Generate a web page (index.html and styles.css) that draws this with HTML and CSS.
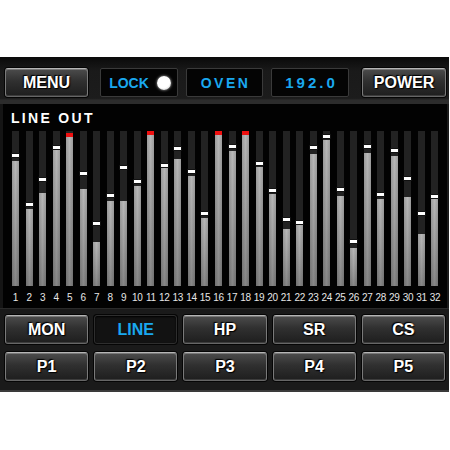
FILE: index.html
```html
<!DOCTYPE html>
<html>
<head>
<meta charset="utf-8">
<link rel="stylesheet" href="styles.css">
</head>
<body>
<div class="screen">
  <div class="topbar">
    <div class="btn menu">MENU</div>
    <div class="disp lock">LOCK <span class="dot"></span></div>
    <div class="disp oven">OVEN</div>
    <div class="disp rate">192.0</div>
    <div class="btn power">POWER</div>
  </div>
  <div class="panel">
    <div class="title">LINE OUT</div>
    <div class="bars">
      <div class="ch"><div class="track"><div class="fill" style="height:125px"></div><div class="mark" style="top:23px"></div></div><div class="num">1</div></div>
      <div class="ch"><div class="track"><div class="fill" style="height:77px"></div><div class="mark" style="top:72px"></div></div><div class="num">2</div></div>
      <div class="ch"><div class="track"><div class="fill" style="height:93px"></div><div class="mark" style="top:47px"></div></div><div class="num">3</div></div>
      <div class="ch"><div class="track"><div class="fill" style="height:137px"></div><div class="mark" style="top:15px"></div></div><div class="num">4</div></div>
      <div class="ch"><div class="track"><div class="fill" style="height:150px"></div><div class="peak" style="top:2px"></div></div><div class="num">5</div></div>
      <div class="ch"><div class="track"><div class="fill" style="height:97px"></div><div class="mark" style="top:41px"></div></div><div class="num">6</div></div>
      <div class="ch"><div class="track"><div class="fill" style="height:44px"></div><div class="mark" style="top:91px"></div></div><div class="num">7</div></div>
      <div class="ch"><div class="track"><div class="fill" style="height:85px"></div><div class="mark" style="top:63px"></div></div><div class="num">8</div></div>
      <div class="ch"><div class="track"><div class="fill" style="height:85px"></div><div class="mark" style="top:35px"></div></div><div class="num">9</div></div>
      <div class="ch"><div class="track"><div class="fill" style="height:100px"></div><div class="mark" style="top:49px"></div></div><div class="num">10</div></div>
      <div class="ch"><div class="track"><div class="fill" style="height:152px"></div><div class="peak" style="top:0"></div></div><div class="num">11</div></div>
      <div class="ch"><div class="track"><div class="fill" style="height:118px"></div><div class="mark" style="top:33px"></div></div><div class="num">12</div></div>
      <div class="ch"><div class="track"><div class="fill" style="height:127px"></div><div class="mark" style="top:16px"></div></div><div class="num">13</div></div>
      <div class="ch"><div class="track"><div class="fill" style="height:110px"></div><div class="mark" style="top:39px"></div></div><div class="num">14</div></div>
      <div class="ch"><div class="track"><div class="fill" style="height:68px"></div><div class="mark" style="top:81px"></div></div><div class="num">15</div></div>
      <div class="ch"><div class="track"><div class="fill" style="height:152px"></div><div class="peak" style="top:0"></div></div><div class="num">16</div></div>
      <div class="ch"><div class="track"><div class="fill" style="height:135px"></div><div class="mark" style="top:14px"></div></div><div class="num">17</div></div>
      <div class="ch"><div class="track"><div class="fill" style="height:152px"></div><div class="peak" style="top:0"></div></div><div class="num">18</div></div>
      <div class="ch"><div class="track"><div class="fill" style="height:119px"></div><div class="mark" style="top:31px"></div></div><div class="num">19</div></div>
      <div class="ch"><div class="track"><div class="fill" style="height:92px"></div><div class="mark" style="top:58px"></div></div><div class="num">20</div></div>
      <div class="ch"><div class="track"><div class="fill" style="height:57px"></div><div class="mark" style="top:87px"></div></div><div class="num">21</div></div>
      <div class="ch"><div class="track"><div class="fill" style="height:61px"></div><div class="mark" style="top:90px"></div></div><div class="num">22</div></div>
      <div class="ch"><div class="track"><div class="fill" style="height:132px"></div><div class="mark" style="top:15px"></div></div><div class="num">23</div></div>
      <div class="ch"><div class="track"><div class="fill" style="height:146px"></div><div class="mark" style="top:4px"></div></div><div class="num">24</div></div>
      <div class="ch"><div class="track"><div class="fill" style="height:90px"></div><div class="mark" style="top:57px"></div></div><div class="num">25</div></div>
      <div class="ch"><div class="track"><div class="fill" style="height:38px"></div><div class="mark" style="top:109px"></div></div><div class="num">26</div></div>
      <div class="ch"><div class="track"><div class="fill" style="height:133px"></div><div class="mark" style="top:14px"></div></div><div class="num">27</div></div>
      <div class="ch"><div class="track"><div class="fill" style="height:87px"></div><div class="mark" style="top:62px"></div></div><div class="num">28</div></div>
      <div class="ch"><div class="track"><div class="fill" style="height:130px"></div><div class="mark" style="top:18px"></div></div><div class="num">29</div></div>
      <div class="ch"><div class="track"><div class="fill" style="height:89px"></div><div class="mark" style="top:46px"></div></div><div class="num">30</div></div>
      <div class="ch"><div class="track"><div class="fill" style="height:52px"></div><div class="mark" style="top:81px"></div></div><div class="num">31</div></div>
      <div class="ch"><div class="track"><div class="fill" style="height:87px"></div><div class="mark" style="top:64px"></div></div><div class="num">32</div></div>
    </div>
  </div>
  <div class="bottom">
    <div class="row">
      <div class="btn">MON</div>
      <div class="btn active">LINE</div>
      <div class="btn">HP</div>
      <div class="btn">SR</div>
      <div class="btn">CS</div>
    </div>
    <div class="row">
      <div class="btn">P1</div>
      <div class="btn">P2</div>
      <div class="btn">P3</div>
      <div class="btn">P4</div>
      <div class="btn">P5</div>
    </div>
  </div>
</div>
</body>
</html>
```
FILE: styles.css
```css
html, body {
  margin: 0;
  padding: 0;
  background: #fff;
}
body {
  font-family: "Liberation Sans", Arial, sans-serif;
}
.screen {
  margin-top: 57px;
  width: 449px;
  height: 335px;
  background: #161616;
  display: flex;
  flex-direction: column;
}
.topbar {
  height: 47px;
  box-sizing: border-box;
  padding: 11px 0 0 5px;
  display: flex;
  background: linear-gradient(#0a0a0a, #1a1a1a 30%, #1c1c1c 88%, #2c2c2c 92%, #2c2c2c);
}
.btn {
  box-sizing: border-box;
  height: 29px;
  display: flex;
  align-items: center;
  justify-content: center;
  color: #fff;
  font-weight: bold;
  font-size: 16px;
  border: 1px solid #7a7a7a;
  border-top-color: #b5b5b5;
  border-bottom-color: #666;
  border-radius: 3px;
  background: linear-gradient(#4c4c4c, #303030 45%, #1e1e1e);
  box-shadow: 0 0 0 1px #050505, inset 0 1px 0 rgba(255,255,255,0.25), inset 0 -1px 0 #3c3c3c;
  text-shadow: 0 0 2px #000, 1px 1px 1px #000, -1px -1px 1px #000, 0.4px 0 0 #fff;
}
.menu { width: 83px; }
.power { width: 84px; margin-left: 13px; }
.disp {
  box-sizing: border-box;
  height: 29px;
  display: flex;
  align-items: center;
  justify-content: center;
  background: #040404;
  border: 1px solid #3a3a3a;
  border-radius: 2px;
  color: #1aa8ef;
  font-weight: bold;
  font-size: 14px;
}
.lock { width: 78px; margin-left: 12px; gap: 8px; padding-left: 2px; }
.oven { width: 77px; margin-left: 8px; letter-spacing: 2.5px; padding-left: 2px; }
.rate { width: 78px; margin-left: 8px; font-size: 15px; letter-spacing: 3px; padding-left: 3px; }
.dot {
  width: 14px;
  height: 14px;
  border-radius: 50%;
  background: radial-gradient(circle at 45% 40%, #fff 55%, #ddd 75%, #999);
  box-shadow: 0 0 3px rgba(255,255,255,0.7);
}
.panel {
  height: 204px;
  box-sizing: border-box;
  background: #020202;
  border-left: 3px solid #151515;
  border-right: 2px solid #1a1a1a;
  padding: 6px 0 0 8px;
}
.title {
  color: #fff;
  font-weight: bold;
  font-size: 14px;
  line-height: 16px;
  letter-spacing: 2.3px;
}
.bars {
  margin-top: 5px;
  display: flex;
  width: 433.3px;
  margin-left: -2.27px;
}
.ch {
  width: 13.54px;
  display: flex;
  flex-direction: column;
  align-items: center;
}
.track {
  position: relative;
  width: 7px;
  height: 155px;
  background: #222;
}
.fill {
  position: absolute;
  left: 0;
  right: 0;
  bottom: 0;
  background: linear-gradient(90deg, rgba(0,0,0,0.12), rgba(255,255,255,0.06) 50%, rgba(0,0,0,0.12)), linear-gradient(#b3b3b3, #9a9a9a 50%, #7e7e7e);
}
.mark {
  position: absolute;
  left: 0;
  right: 0;
  height: 3px;
  background: #fff;
  box-shadow: 0 0 0 1px #111;
}
.peak {
  position: absolute;
  left: 0;
  right: 0;
  height: 4px;
  background: #ee1010;
}
.num {
  margin-top: 6px;
  color: #e6e6e6;
  font-size: 10px;
  line-height: 12px;
  letter-spacing: -0.3px;
  white-space: nowrap;
}
.bottom {
  flex: 1;
  box-sizing: border-box;
  border-top: 1px solid #2a2a2a;
  border-bottom: 2px solid #3a3a3a;
  padding: 6px 0 0 5px;
  background: #1a1a1a;
  display: flex;
  flex-direction: column;
  gap: 8px;
}
.row {
  display: flex;
  gap: 6px;
}
.row .btn { width: 83.2px; }
.btn.active {
  background: #121212;
  border: 1px solid #2e2e2e;
  box-shadow: 0 0 0 1px #050505, inset 0 1px 2px #000;
  color: #1aa8ef;
  text-shadow: none;
}
```
